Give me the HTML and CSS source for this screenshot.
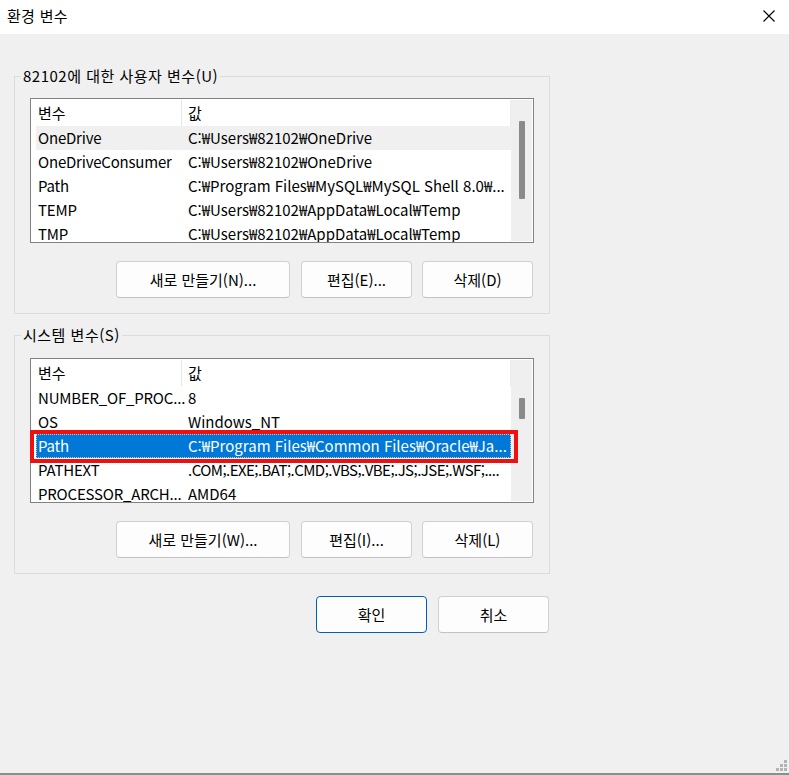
FILE: index.html
```html
<!DOCTYPE html>
<html lang="ko">
<head>
<meta charset="utf-8">
<title>환경 변수</title>
<link rel="stylesheet" href="styles.css">
</head>
<body>
<div class="window">
  <div class="titlebar">
    <span class="title">환경 변수</span>
    <span class="close" aria-label="닫기">
      <svg width="12" height="12" viewBox="0 0 12 12"><path d="M0.5 0.5 L11.5 11.5 M11.5 0.5 L0.5 11.5" stroke="#000" stroke-width="1.1" fill="none"/></svg>
    </span>
  </div>
  <div class="content">
    <fieldset class="group">
      <legend class="group-title">82102에 대한 사용자 변수(U)</legend>
      <div class="list">
        <div class="list-inner">
          <div class="rows">
            <div class="head">
              <div class="hcell hname">변수</div>
              <div class="hcell hvalue">값</div>
            </div>
            <div class="row hover"><div class="cname">OneDrive</div><div class="cvalue">C:₩Users₩82102₩OneDrive</div></div>
            <div class="row"><div class="cname">OneDriveConsumer</div><div class="cvalue">C:₩Users₩82102₩OneDrive</div></div>
            <div class="row"><div class="cname">Path</div><div class="cvalue">C:₩Program Files₩MySQL₩MySQL Shell 8.0₩...</div></div>
            <div class="row"><div class="cname">TEMP</div><div class="cvalue">C:₩Users₩82102₩AppData₩Local₩Temp</div></div>
            <div class="row"><div class="cname">TMP</div><div class="cvalue">C:₩Users₩82102₩AppData₩Local₩Temp</div></div>
          </div>
          <div class="vscroll"><div class="thumb thumb-user"></div></div>
        </div>
      </div>
      <div class="btn-row">
        <button class="btn btn-new">새로 만들기(N)...</button>
        <button class="btn">편집(E)...</button>
        <button class="btn">삭제(D)</button>
      </div>
    </fieldset>

    <fieldset class="group group-sys">
      <legend class="group-title">시스템 변수(S)</legend>
      <div class="list">
        <div class="list-inner">
          <div class="rows">
            <div class="head">
              <div class="hcell hname">변수</div>
              <div class="hcell hvalue">값</div>
            </div>
            <div class="row"><div class="cname">NUMBER_OF_PROC...</div><div class="cvalue">8</div></div>
            <div class="row"><div class="cname">OS</div><div class="cvalue">Windows_NT</div></div>
            <div class="row selected"><div class="cname">Path</div><div class="cvalue">C:₩Program Files₩Common Files₩Oracle₩Ja...</div></div>
            <div class="row"><div class="cname">PATHEXT</div><div class="cvalue cvalue-tight">.COM;.EXE;.BAT;.CMD;.VBS;.VBE;.JS;.JSE;.WSF;....</div></div>
            <div class="row"><div class="cname">PROCESSOR_ARCH...</div><div class="cvalue">AMD64</div></div>
          </div>
          <div class="vscroll"><div class="thumb thumb-sys"></div></div>
        </div>
        <span class="annot"></span>
      </div>
      <div class="btn-row">
        <button class="btn btn-new">새로 만들기(W)...</button>
        <button class="btn">편집(I)...</button>
        <button class="btn">삭제(L)</button>
      </div>
    </fieldset>

    <div class="dialog-btns">
      <button class="btn btn-default">확인</button>
      <button class="btn">취소</button>
    </div>
  </div>
  <div class="bottom-edge"></div>
  <svg class="grip" width="12" height="12" viewBox="0 0 12 12">
    <rect x="8" y="0" width="3" height="3" fill="#b4b4b4"/>
    <rect x="4" y="4" width="3" height="3" fill="#b4b4b4"/>
    <rect x="8" y="4" width="3" height="3" fill="#b4b4b4"/>
    <rect x="0" y="8" width="3" height="3" fill="#b4b4b4"/>
    <rect x="4" y="8" width="3" height="3" fill="#b4b4b4"/>
    <rect x="8" y="8" width="3" height="3" fill="#b4b4b4"/>
  </svg>
</div>
</body>
</html>
```
FILE: styles.css
```css
* { box-sizing: border-box; }

html, body {
  margin: 0;
  padding: 0;
}

body {
  font-family: "Noto Sans CJK KR", "Noto Sans", sans-serif;
  font-size: 15px;
  color: #000;
  background: #f0f0f0;
}

.window {
  position: relative;
  width: 789px;
  height: 775px;
  display: flex;
  flex-direction: column;
  overflow: hidden;
}

.titlebar {
  height: 34px;
  background: #ffffff;
  display: flex;
  align-items: center;
  justify-content: space-between;
  padding: 0 14px 0 7px;
  flex: none;
}

.title {
  font-size: 15px;
  line-height: 20px;
  margin-top: -2px;
  letter-spacing: 0.3px;
}

.close {
  display: flex;
  width: 12px;
  height: 12px;
  margin-top: -2px;
}

.content {
  flex: 1;
  background: #f0f0f0;
  padding: 32px 0 0 14px;
}

.bottom-edge {
  height: 2px;
  background: #8e8e8e;
  flex: none;
}

.group {
  width: 536px;
  margin: 0;
  border: 1px solid #dcdcdc;
  padding: 12px 15px 15px 15px;
  min-inline-size: 0;
}

.group-sys {
  margin-top: 11px;
  padding-top: 13px;
}

.group-title {
  margin-left: -9px;
  padding: 0 2px;
  line-height: 20px;
  font-size: 15px;
  letter-spacing: 0.5px;
}

.list {
  position: relative;
  width: 504px;
  height: 145px;
  border: 1px solid #828282;
  background: #ffffff;
}

.list-inner {
  display: flex;
  height: 100%;
  overflow: hidden;
}

.rows {
  flex: 1;
  padding-left: 5px;
  overflow: hidden;
  min-width: 0;
}

.head {
  display: flex;
  height: 27px;
  align-items: stretch;
}

.hcell {
  line-height: 26px;
  white-space: nowrap;
  border-right: 1px solid #e5e5e5;
  margin-top: 1px;
}

.hname {
  width: 146px;
  padding-left: 2px;
}

.hvalue {
  flex: 1;
  padding-left: 6px;
  border-right-color: #ececec;
}

.row {
  position: relative;
  display: flex;
  height: 24px;
  line-height: 24px;
  white-space: nowrap;
}

.row.hover {
  background: #f0f0f0;
}

.row.selected {
  background: #0078d7;
  color: #ffffff;
  outline: 1px dotted rgba(255, 210, 160, 0.85);
  outline-offset: -1px;
}

.cname {
  width: 150px;
  padding-left: 2px;
  overflow: hidden;
  flex: none;
  letter-spacing: -0.2px;
}

.cvalue {
  flex: 1;
  padding-left: 2px;
  overflow: hidden;
}

.cvalue-tight {
  letter-spacing: -0.55px;
}

.vscroll {
  width: 21px;
  margin: 1px 1px 1px 0;
  background: #efefef;
  flex: none;
  position: relative;
}

.thumb {
  width: 6px;
  margin-left: 8px;
  background: #8a8a8a;
  border-radius: 1px;
}

.thumb-user {
  margin-top: 21px;
  height: 78px;
}

.thumb-sys {
  margin-top: 38px;
  height: 21px;
}

.annot {
  position: absolute;
  left: -1px;
  top: 71px;
  width: 488px;
  height: 33px;
  border: 4px solid #ee1111;
  pointer-events: none;
}

.btn-row {
  display: flex;
  justify-content: flex-end;
  gap: 10px;
  width: 504px;
  padding-right: 1px;
  margin-top: 18px;
}

.btn {
  font-family: inherit;
  font-size: 15px;
  color: #000;
  width: 111px;
  height: 37px;
  background: #fdfdfd;
  border: 1px solid #d0d0d0;
  border-bottom-color: #c2c2c2;
  border-radius: 4px;
  padding: 0;
  line-height: 20px;
}

.btn-new {
  width: 174px;
  margin-right: 1px;
}

.btn-default {
  border: 1px solid #005fb8;
}

.dialog-btns {
  display: flex;
  justify-content: flex-end;
  gap: 11px;
  width: 536px;
  padding-right: 1px;
  margin-top: 22px;
}

.grip {
  position: absolute;
  left: 776px;
  top: 760px;
}
```
